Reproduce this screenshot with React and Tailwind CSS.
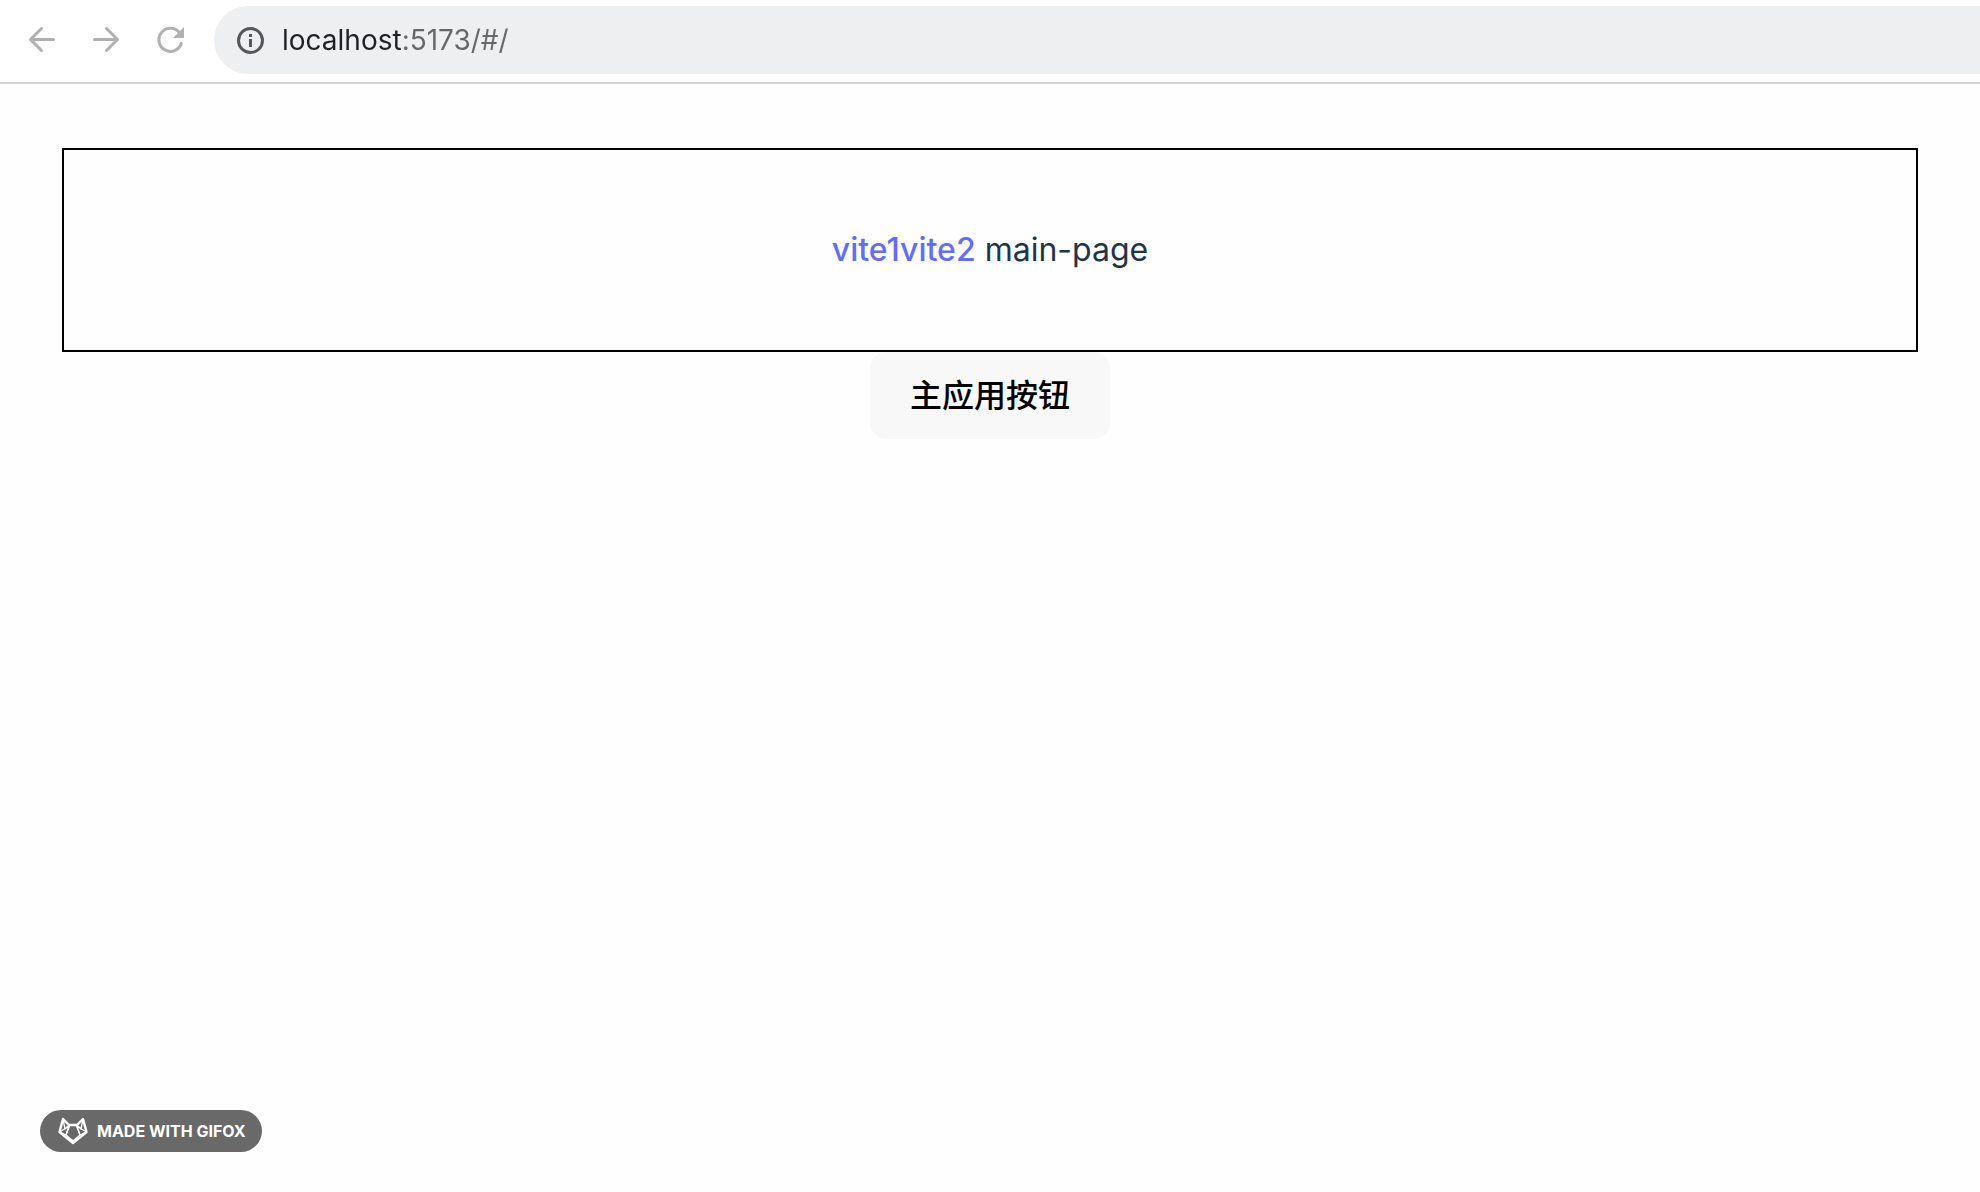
const iconButton = "flex size-8 items-center justify-center text-[#b1b1b1]";

function ArrowLeft() {
  return (
    <svg viewBox="0 0 32 32" className="size-8" fill="none" stroke="currentColor" strokeWidth="3" strokeLinecap="round" strokeLinejoin="round">
      <path d="M27.5 15.5H4.5M15.5 4.5L4.5 15.5L15.5 26.5" />
    </svg>
  );
}

function ArrowRight() {
  return (
    <svg viewBox="0 0 32 32" className="size-8" fill="none" stroke="currentColor" strokeWidth="3" strokeLinecap="round" strokeLinejoin="round">
      <path d="M4.5 15.5H27.5M16.5 4.5L27.5 15.5L16.5 26.5" />
    </svg>
  );
}

function Reload() {
  return (
    <svg viewBox="0 0 32 32" className="size-8" fill="none">
      <path d="M27.3 19.5A11.5 11.5 0 1 1 25 8.2" stroke="currentColor" strokeWidth="3" strokeLinecap="round" />
      <path d="M30 3V14H19Z" fill="currentColor" />
    </svg>
  );
}

function Info() {
  return (
    <svg viewBox="0 0 32 32" className="size-8" fill="none">
      <circle cx="16.5" cy="16.5" r="12" stroke="currentColor" strokeWidth="3" />
      <path d="M15 10h3v3h-3zM15 15h3v8h-3z" fill="currentColor" />
    </svg>
  );
}

function Fox() {
  return (
    <svg viewBox="0 0 32 28" className="h-7 w-8" fill="none" stroke="white" strokeLinejoin="round">
      <path d="M6 2L12 8H20L26 2L29.5 15L16 26L2.5 15Z" strokeWidth="2.4" />
      <path d="M6 2L8 12L12 8M26 2L24 12L20 8M2.5 15L12.5 9L9 18ZM29.5 15L19.5 9L23 18Z" strokeWidth="1.3" />
      <path d="M12 8.500L9 18L16 24L23 18L20 8.500" strokeWidth="1.3" />
      <path d="M12 21.500L16 23.500L20 21.500L16 26.500Z" fill="white" />
    </svg>
  );
}

function BrowserBar() {
  return (
    <header className="flex items-center border-b-2 border-[#d3d4d5] bg-white pt-1.5 pb-2 pl-[26px]">
      <nav className="flex gap-8" aria-label="Browser">
        <button className={iconButton} aria-label="Back"><ArrowLeft /></button>
        <button className={iconButton} aria-label="Forward"><ArrowRight /></button>
        <button className={iconButton} aria-label="Reload"><Reload /></button>
      </nav>
      <div className="ml-7 flex h-[68px] flex-1 items-center gap-4 rounded-l-full bg-[#eeeff1] pl-5">
        <button className="text-[#55575a]" aria-label="Site information"><Info /></button>
        <input
          type="text"
          aria-label="Address"
          defaultValue="localhost:5173/#/"
          className="h-10 min-w-0 flex-1 bg-[linear-gradient(to_right,#202124_119px,#66686a_119px)] bg-clip-text text-[28px] text-transparent outline-none"
        />
      </div>
    </header>
  );
}

export default function App() {
  return (
    <div className="flex min-h-screen flex-col bg-[#fefefe] font-['Inter','Noto_Sans_CJK_SC',sans-serif]">
      <BrowserBar />
      <main className="flex flex-1 flex-col items-center px-[62px] pt-16">
        <section className="w-full border-2 border-black py-[76px] text-center text-[32px] leading-12 text-[#213547]">
          <a href="#/vite1" className="font-medium text-[#646cff]">vite1</a>
          <a href="#/vite2" className="font-medium text-[#646cff]">vite2</a> main-page
        </section>
        <button className="h-[87px] rounded-2xl bg-[#f8f8f8] px-10 text-[32px] font-medium text-black">
          主应用按钮
        </button>
      </main>
      <footer className="flex px-10 pb-10">
        <div className="flex h-[42px] items-center gap-2 rounded-full bg-[#696969] pr-4 pl-[17px] text-white">
          <Fox />
          <span className="text-base font-bold">MADE WITH GIFOX</span>
        </div>
      </footer>
    </div>
  );
}
